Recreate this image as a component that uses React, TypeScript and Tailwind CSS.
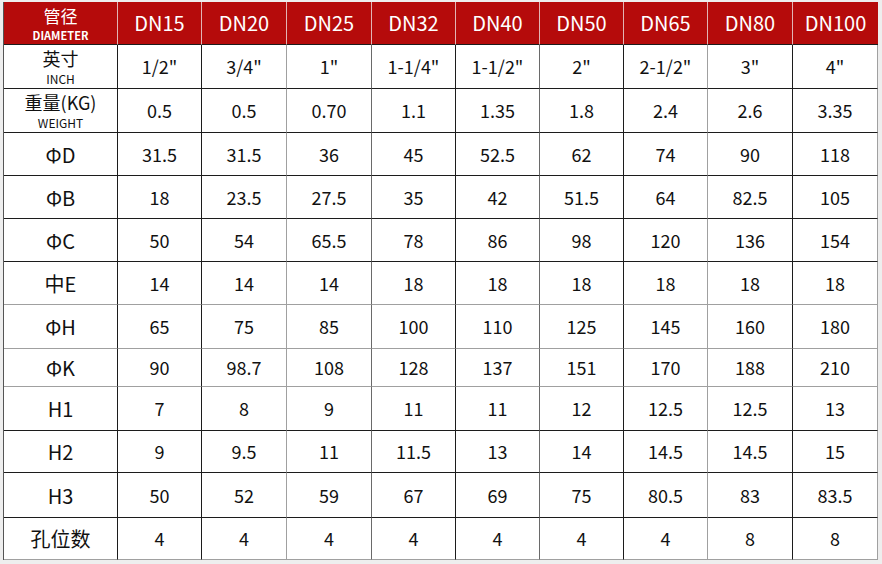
import React from "react";

const font = { fontFamily: '"Noto Sans CJK SC", "Noto Sans", sans-serif' };

const sizes = ["DN15", "DN20", "DN25", "DN32", "DN40", "DN50", "DN65", "DN80", "DN100"];

type Row = { label: string; sub?: string; values: string[] };

const rows: Row[] = [
  { label: "英寸", sub: "INCH", values: ['1/2"', '3/4"', '1"', '1-1/4"', '1-1/2"', '2"', '2-1/2"', '3"', '4"'] },
  { label: "重量(KG)", sub: "WEIGHT", values: ["0.5", "0.5", "0.70", "1.1", "1.35", "1.8", "2.4", "2.6", "3.35"] },
  { label: "ΦD", values: ["31.5", "31.5", "36", "45", "52.5", "62", "74", "90", "118"] },
  { label: "ΦB", values: ["18", "23.5", "27.5", "35", "42", "51.5", "64", "82.5", "105"] },
  { label: "ΦC", values: ["50", "54", "65.5", "78", "86", "98", "120", "136", "154"] },
  { label: "中E", values: ["14", "14", "14", "18", "18", "18", "18", "18", "18"] },
  { label: "ΦH", values: ["65", "75", "85", "100", "110", "125", "145", "160", "180"] },
  { label: "ΦK", values: ["90", "98.7", "108", "128", "137", "151", "170", "188", "210"] },
  { label: "H1", values: ["7", "8", "9", "11", "11", "12", "12.5", "12.5", "13"] },
  { label: "H2", values: ["9", "9.5", "11", "11.5", "13", "14", "14.5", "14.5", "15"] },
  { label: "H3", values: ["50", "52", "59", "67", "69", "75", "80.5", "83", "83.5"] },
  { label: "孔位数", values: ["4", "4", "4", "4", "4", "4", "4", "8", "8"] },
];

// scanned table: some rules came out darker than others
const colRight = [
  "border-r-[#1c1c1c]",
  "border-r-[#1c1c1c]",
  "border-r-[#a0a0a0]",
  "border-r-[#6a6a6a]",
  "border-r-[#1c1c1c]",
  "border-r-[#6a6a6a]",
  "border-r-[#1c1c1c]",
  "border-r-[#a0a0a0]",
  "border-r-[#1c1c1c]",
  "border-r-[#a0a0a0]",
];

const rowBottom = [
  "border-b-[#1c1c1c]",
  "border-b-[#1c1c1c]",
  "border-b-[#1c1c1c]",
  "border-b-[#1c1c1c]",
  "border-b-[#1c1c1c]",
  "border-b-[#1c1c1c]",
  "border-b-[#a0a0a0]",
  "border-b-[#a0a0a0]",
  "border-b-[#a0a0a0]",
  "border-b-[#1c1c1c]",
  "border-b-[#1c1c1c]",
  "border-b-[#1c1c1c]",
  "border-b-[#a0a0a0]",
];

export default function App() {
  return (
    <div className="h-[564px] w-[882px] bg-[#eeeeee] pt-[2px] pl-[3px] text-[#111]" style={font}>
      <div className="grid w-[874px] grid-cols-[114px_84px_85px_85px_84px_84px_84px_84px_85px_85px] grid-rows-[43px_44px_44px_43px_43px_43px_43px_44px_38px_44px_42px_45px_42px] border-l border-l-[#555] bg-white">
        <div className="flex flex-col items-center justify-center gap-[6px] border-r border-b border-r-[#e2b4b4] border-b-[#1c1c1c] bg-[#b50b0b] pt-[2px] text-white">
          <span className="text-[17px] leading-none">管径</span>
          <span className="text-[11px] font-bold leading-none">DIAMETER</span>
        </div>
        {sizes.map((s, i) => (
          <div
            key={s}
            className={`flex items-center justify-center border-b border-b-[#1c1c1c] bg-[#b50b0b] text-[20px] font-normal text-white ${
              i < sizes.length - 1 ? "border-r border-r-[#e2b4b4]" : ""
            }`}
          >
            {s}
          </div>
        ))}

        {rows.map((r, ri) => (
          <React.Fragment key={r.label}>
            <div
              className={`flex flex-col items-center justify-center gap-[6px] border-r border-b ${colRight[0]} ${rowBottom[ri + 1]}`}
            >
              {r.sub ? (
                <>
                  <span className="text-[18px] leading-none">{r.label}</span>
                  <span className="text-[12px] leading-none">{r.sub}</span>
                </>
              ) : (
                <span className="pt-[1px] text-[20px] leading-none">{r.label}</span>
              )}
            </div>
            {r.values.map((v, ci) => (
              <div
                key={ci}
                className={`flex items-center justify-center border-r border-b text-[18px] ${colRight[ci + 1]} ${rowBottom[ri + 1]}`}
              >
                {v}
              </div>
            ))}
          </React.Fragment>
        ))}
      </div>
    </div>
  );
}
